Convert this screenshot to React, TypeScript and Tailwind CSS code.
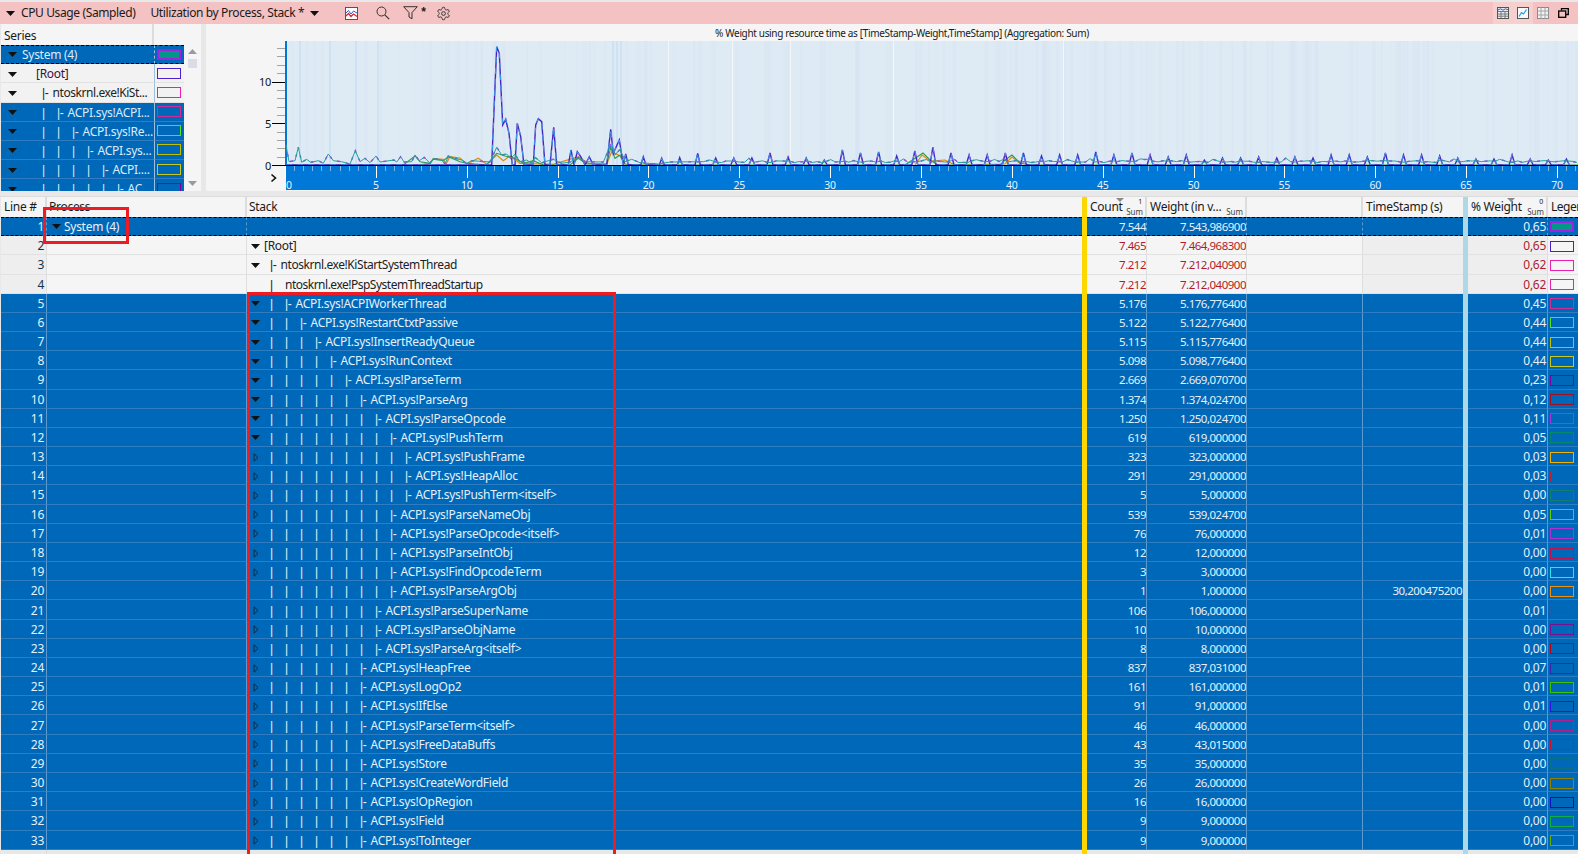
import React from "react";

type Exp = "open" | "closed" | "none";
type Row = { line: number; pipes: number; name: string; exp: Exp; count: string; weight: string; ts?: string; pct: string; color: string };

const rows: Row[] = [
  { line: 5, pipes: 1, name: "ACPI.sys!ACPIWorkerThread", exp: "open", count: "5.176", weight: "5.176,776400", pct: "0,45", color: "#d02c98" },
  { line: 6, pipes: 2, name: "ACPI.sys!RestartCtxtPassive", exp: "open", count: "5.122", weight: "5.122,776400", pct: "0,44", color: "#5fe020" },
  { line: 7, pipes: 3, name: "ACPI.sys!InsertReadyQueue", exp: "open", count: "5.115", weight: "5.115,776400", pct: "0,44", color: "#c0c000" },
  { line: 8, pipes: 4, name: "ACPI.sys!RunContext", exp: "open", count: "5.098", weight: "5.098,776400", pct: "0,44", color: "#c8c820" },
  { line: 9, pipes: 5, name: "ACPI.sys!ParseTerm", exp: "open", count: "2.669", weight: "2.669,070700", pct: "0,23", color: "#7a00a0" },
  { line: 10, pipes: 6, name: "ACPI.sys!ParseArg", exp: "open", count: "1.374", weight: "1.374,024700", pct: "0,12", color: "#a01020" },
  { line: 11, pipes: 7, name: "ACPI.sys!ParseOpcode", exp: "open", count: "1.250", weight: "1.250,024700", pct: "0,11", color: "#b030e0" },
  { line: 12, pipes: 8, name: "ACPI.sys!PushTerm", exp: "open", count: "619", weight: "619,000000", pct: "0,05", color: "#008a6a" },
  { line: 13, pipes: 9, name: "ACPI.sys!PushFrame", exp: "closed", count: "323", weight: "323,000000", pct: "0,03", color: "#f0b000" },
  { line: 14, pipes: 9, name: "ACPI.sys!HeapAlloc", exp: "closed", count: "291", weight: "291,000000", pct: "0,03", color: "#c02030" },
  { line: 15, pipes: 9, name: "ACPI.sys!PushTerm<itself>", exp: "closed", count: "5", weight: "5,000000", pct: "0,00", color: "#10806a" },
  { line: 16, pipes: 8, name: "ACPI.sys!ParseNameObj", exp: "closed", count: "539", weight: "539,024700", pct: "0,05", color: "#60d000" },
  { line: 17, pipes: 8, name: "ACPI.sys!ParseOpcode<itself>", exp: "closed", count: "76", weight: "76,000000", pct: "0,01", color: "#b030d0" },
  { line: 18, pipes: 8, name: "ACPI.sys!ParseIntObj", exp: "closed", count: "12", weight: "12,000000", pct: "0,00", color: "#c01050" },
  { line: 19, pipes: 8, name: "ACPI.sys!FindOpcodeTerm", exp: "closed", count: "3", weight: "3,000000", pct: "0,00", color: "#30e0f0" },
  { line: 20, pipes: 8, name: "ACPI.sys!ParseArgObj", exp: "none", count: "1", weight: "1,000000", ts: "30,200475200", pct: "0,00", color: "#f09010" },
  { line: 21, pipes: 7, name: "ACPI.sys!ParseSuperName", exp: "closed", count: "106", weight: "106,000000", pct: "0,01", color: "#1a5fb0" },
  { line: 22, pipes: 7, name: "ACPI.sys!ParseObjName", exp: "closed", count: "10", weight: "10,000000", pct: "0,00", color: "#7a1090" },
  { line: 23, pipes: 7, name: "ACPI.sys!ParseArg<itself>", exp: "closed", count: "8", weight: "8,000000", pct: "0,00", color: "#c00010" },
  { line: 24, pipes: 6, name: "ACPI.sys!HeapFree", exp: "closed", count: "837", weight: "837,031000", pct: "0,07", color: "#4020b0" },
  { line: 25, pipes: 6, name: "ACPI.sys!LogOp2", exp: "closed", count: "161", weight: "161,000000", pct: "0,01", color: "#40c000" },
  { line: 26, pipes: 6, name: "ACPI.sys!IfElse", exp: "closed", count: "91", weight: "91,000000", pct: "0,01", color: "#3010e0" },
  { line: 27, pipes: 6, name: "ACPI.sys!ParseTerm<itself>", exp: "closed", count: "46", weight: "46,000000", pct: "0,00", color: "#b02090" },
  { line: 28, pipes: 6, name: "ACPI.sys!FreeDataBuffs", exp: "closed", count: "43", weight: "43,015000", pct: "0,00", color: "#d01030" },
  { line: 29, pipes: 6, name: "ACPI.sys!Store", exp: "closed", count: "35", weight: "35,000000", pct: "0,00", color: "#0a7088" },
  { line: 30, pipes: 6, name: "ACPI.sys!CreateWordField", exp: "closed", count: "26", weight: "26,000000", pct: "0,00", color: "#908000" },
  { line: 31, pipes: 6, name: "ACPI.sys!OpRegion", exp: "closed", count: "16", weight: "16,000000", pct: "0,00", color: "#1010c0" },
  { line: 32, pipes: 6, name: "ACPI.sys!Field", exp: "closed", count: "9", weight: "9,000000", pct: "0,00", color: "#10b040" },
  { line: 33, pipes: 6, name: "ACPI.sys!ToInteger", exp: "closed", count: "9", weight: "9,000000", pct: "0,00", color: "#60b000" },
];

function Down({ className = "" }: { className?: string }) {
  return (
    <svg width="9" height="5" viewBox="0 0 9 5" className={"shrink-0 " + className}>
      <path d="M0 0H9L4.5 5Z" fill="#111" />
    </svg>
  );
}
function Closed() {
  return (
    <svg width="6" height="9" viewBox="0 0 6 9" className="shrink-0">
      <path d="M1 .8V8.2L5 4.5Z" fill="none" stroke="#16263a" strokeWidth="1" />
    </svg>
  );
}
function Pipes({ n }: { n: number }) {
  return (
    <>
      {Array.from({ length: n }).map((_, i) => (
        <span key={i} className="w-[15px] shrink-0 font-['Liberation_Sans']">|</span>
      ))}
    </>
  );
}
function Prefix() {
  return <span className="whitespace-pre font-['Liberation_Sans'] mr-[1px]">{"|- "}</span>;
}

const COLS = "grid grid-cols-[46px_200px_835px_5px_60px_100px_116px_100px_5px_80px_30px]";
const NUM = "justify-end text-[11.5px] tracking-[-0.5px] ";

function Swatch({ color, fill, thick }: { color: string; fill?: string; thick?: boolean }) {
  return (
    <div
      className={"w-[24px] h-[11px] shrink-0 " + (thick ? "border-2" : "border")}
      style={{ borderColor: color, backgroundColor: fill }}
    />
  );
}

function TableRow({ kind, line, stack, count, weight, ts, pct, legend, process }: {
  kind: "focus" | "plain" | "sel";
  line: number;
  stack: React.ReactNode;
  count: string;
  weight: string;
  ts?: string;
  pct: string;
  legend: React.ReactNode;
  process?: React.ReactNode;
}) {
  const sel = kind !== "plain";
  const base =
    "flex items-center min-w-0 overflow-hidden " +
    (kind === "focus"
      ? "border-y border-dashed border-y-black bg-[#0068b8] text-[#e6f0fa] "
      : kind === "sel"
      ? "border-b border-b-[#2f7cc0] bg-[#0068b8] text-[#e6f0fa] pt-[2px] "
      : "border-b border-b-[#e2e2e2] pt-[2px] ");
  const div = sel ? "border-r border-r-[#5c9ad0] " : "border-r border-r-[#dedede] ";
  const light = sel ? "" : "bg-[#f5f5f5] ";
  const dark = sel ? "" : "bg-[#eeeeee] ";
  const num = sel ? "" : "text-[#b01c2c] ";
  return (
    <div className={COLS + " h-[19.18px]"}>
      <div className={base + div + dark + "justify-end pr-[2px]" + (sel ? " text-[#e6f0fa]" : " text-[#17324c]")}>{line}</div>
      <div className={base + div + light}>{process}</div>
      <div className={base + light + (sel ? "text-[#e6f0fa]" : "text-[#222]")}>{stack}</div>
      <div className="bg-[#ffd700]" />
      <div className={base + div + light + num + NUM}>{count}</div>
      <div className={base + div + light + num + NUM}>{weight}</div>
      <div className={base + div + light} />
      <div className={base + dark + NUM + "pr-[1px]"}>{ts}</div>
      <div className="bg-[#add8e6]" />
      <div className={base + div + dark + num + "justify-end pr-[1px]"}>{pct}</div>
      <div className={base + light + "pl-[2px]"}>{legend}</div>
    </div>
  );
}

function SumHead({ label, rank, className = "" }: { label: string; rank?: string; className?: string }) {
  return (
    <div className={"relative flex items-center pl-[3px] overflow-hidden border-r-2 border-r-[#dcdcdc] " + className}>
      <span className="whitespace-nowrap">{label}</span>
      {rank && (
        <svg width="8" height="4" viewBox="0 0 8 4" className="absolute top-[1px] left-[50%]">
          <path d="M0 0H8L4 4Z" fill="#8a8a8a" />
        </svg>
      )}
      {rank && <span className="absolute top-0 right-[3px] text-[7px] leading-[9px]">{rank}</span>}
      <span className="absolute bottom-[0px] right-[2px] text-[8px] leading-[10px] tracking-normal text-[#444]">Sum</span>
    </div>
  );
}

function SeriesRow({ kind, children, color, fill, thick, dashed }: {
  kind: "sel" | "plain";
  children: React.ReactNode;
  color: string;
  fill?: string;
  thick?: boolean;
  dashed?: boolean;
}) {
  const c =
    kind === "sel"
      ? "bg-[#0068b8] text-[#dcebf8] " + (dashed ? "border-y border-dashed border-y-black" : "border-b border-b-[#2f7cc0]")
      : "bg-[#f2f2f2] text-[#222] border-b border-b-[#e2e2e2]";
  return (
    <div className="flex h-[19.18px] shrink-0">
      <div className={"w-[153px] flex items-center overflow-hidden pl-[7px] whitespace-nowrap " + (dashed ? "" : "pt-[2px] ") + c}>{children}</div>
      <div className={"w-[30px] flex items-center pl-[2px] border-l border-l-[#9fc0dc] " + c}>
        <Swatch color={color} fill={fill} thick={thick} />
      </div>
    </div>
  );
}

/* ---------- chart ---------- */
const X = (t: number) => 285 + 18.17 * t;
const z4 = (a: number[][]) => a.map(([x, y]) => [270 + x / 3, 30 + y / 3]);
const rnd = (i: number) => {
  const v = Math.sin(i * 12.9898 + 4.1) * 43758.5453;
  return v - Math.floor(v);
};
const spikeH = [7, 7, 7, 12, 8, 7, 5, 15, 12, 13, 9, 14, 18, 12, 10, 10, 12, 12, 9, 10, 10, 13, 10, 12, 10, 8, 10, 5, 7, 7, 8, 7, 8, 7, 10, 10, 8, 12, 10, 10, 9, 7, 6, 6, 10, 6, 5, 6];

const blueEarly = z4([[48,405],[665,405],[670,290],[680,50],[688,70],[698,285],[707,268],[717,310],[727,405],[735,405],[742,280],[752,320],[762,405],[790,405],[797,285],[805,266],[815,275],[825,405],[840,405],[851,292],[860,405],[895,405],[903,360],[912,405],[922,365],[932,380],[945,405],[958,380],[970,405],[1010,405],[1022,298],[1030,370],[1048,330],[1060,405],[1067,372],[1075,405],[1112,405],[1120,380],[1128,405],[1168,405],[1175,385],[1183,405],[1222,405],[1229,383],[1237,405],[1275,405],[1283,370],[1291,405],[1330,405]]);
const blueLate: number[][] = [];
spikeH.forEach((h, k) => {
  const x = 715.7 + 18.1 * k;
  blueLate.push([x - 3, 165], [x, 165 - h], [x + 3, 165]);
});
const blue = [...blueEarly, ...blueLate];

const tealEarly = z4([[48,345],[57,395],[75,392],[85,352],[95,397],[110,388],[122,397],[145,392],[160,400],[175,372],[190,392],[215,395],[240,402],[256,362],[270,395],[285,385],[300,398],[318,378],[330,396],[372,390],[380,396],[392,380],[402,396],[425,395],[435,375],[448,392],[463,382],[480,400],[490,385],[515,390],[525,402],[535,378],[555,385],[575,390],[590,400],[605,392],[660,396],[680,352],[695,375],[710,372],[722,385],[735,373],[750,395],[770,390],[785,400],[795,382],[815,398],[850,388],[875,400],[900,396],[925,382],[945,395],[1000,396],[1022,345],[1035,375],[1050,358],[1065,395],[1085,388],[1110,398],[1165,402],[1200,396],[1300,395],[1320,390],[1340,397]]);
const tealLate: number[][] = [];
for (let i = 0; i < 190; i++) {
  const x = 717 + i * 4.55;
  const big = rnd(i) > 0.88 ? 2.5 : 0;
  tealLate.push([x, 161.6 + (rnd(i + 40) - 0.5) * 2 - big]);
}
const teal = [...tealEarly, ...tealLate];

const greenEarly = z4([[48,405],[400,405],[435,378],[450,395],[480,400],[490,388],[520,392],[535,380],[570,395],[590,400],[650,405],[680,370],[705,378],[735,385],[760,400],[790,392],[820,405],[900,405],[925,385],[950,402],[1010,402],[1022,352],[1035,385],[1050,375],[1065,402],[1100,405]]);
const greenLate = [[905, 165], [917, 157], [923, 153], [930, 160], [938, 165], [1000, 165], [1005, 160], [1012, 155], [1020, 163], [1030, 165], [1578, 165]];
const green = [...greenEarly, ...greenLate];
const orange = z4([[440,405],[480,400],[490,386],[520,388],[528,402],[540,380],[570,384],[590,402],[625,385],[650,403],[680,375],[700,392],[720,378],[750,400],[850,403],[925,380],[955,400],[1010,403],[1025,365],[1050,378],[1065,403]]);
const orangeLate = [[915, 165], [922, 155], [930, 161], [945, 160], [955, 165], [1005, 164], [1012, 157], [1022, 165]];

const pts = (a: number[][]) => a.map((p) => p[0].toFixed(1) + "," + p[1].toFixed(1)).join(" ");

const stripes = Array.from({ length: 170 }).map((_, i) => ({
  x: 287 + rnd(i + 300) * 1290,
  w: 1 + Math.floor(rnd(i + 500) * 4),
  o: 0.05 + rnd(i + 700) * 0.2,
}));

function Chart() {
  return (
    <svg width="1372" height="150" viewBox="206 41 1372 150" className="block">
      <rect x="286" y="41" width="1292" height="125" fill="#deeaf4" />
      {stripes.map((s, i) => (
        <rect key={i} x={s.x} y="41" width={s.w} height="125" fill="#cfe1f1" opacity={s.o} />
      ))}
      {[299, 329, 355, 377, 612, 616, 620].map((x) => (
        <rect key={x} x={x} y="41" width="2" height="125" fill="#cfe2f3" />
      ))}
      {[668, 732, 790, 893, 1063].map((x) => (
        <rect key={x} x={x} y="41" width="1" height="125" fill="#f4f7fa" />
      ))}
      {/* y axis */}
      <rect x="285" y="41" width="2" height="125" fill="#0078d7" />
      {Array.from({ length: 14 }).map((_, i) => {
        const n = i + 1;
        const y = Math.round(165 - 8.35 * n) + 0.5;
        const major = n % 5 === 0;
        return <line key={n} x1={major ? 272 : 277} x2="285" y1={y} y2={y} stroke={major ? "#000" : "#a4a4a4"} />;
      })}
      <text x="271" y="86" textAnchor="end" fontSize="11" fill="#111" fontFamily="Noto Sans">10</text>
      <text x="271" y="128" textAnchor="end" fontSize="11" fill="#111" fontFamily="Noto Sans">5</text>
      <text x="271" y="170" textAnchor="end" fontSize="11" fill="#111" fontFamily="Noto Sans">0</text>
      {/* series */}
      <polyline points={pts(orange)} fill="none" stroke="#e08a10" strokeWidth="1.2" />
      <polyline points={pts(orangeLate)} fill="none" stroke="#e08a10" strokeWidth="1.2" />
      <polyline points={pts(green)} fill="none" stroke="#2f9a50" strokeWidth="1.1" />
      <polyline points={pts(blue)} fill="none" stroke="#4a22c4" strokeWidth="1.4" />
      <polyline points={pts(blue)} fill="none" stroke="#3aa0ea" strokeWidth="1" strokeDasharray="6 5" />
      <polyline points={pts(teal)} fill="none" stroke="#b030f0" strokeWidth="1.4" strokeDasharray="3 6" />
      <polyline points={pts(teal)} fill="none" stroke="#1fa39a" strokeWidth="1" />
      {/* x axis */}
      <rect x="272" y="165" width="1306" height="1" fill="#000" />
      <rect x="286" y="166" width="1292" height="24" fill="#0078d7" />
      {Array.from({ length: 143 }).map((_, i) => {
        const x = Math.round(X(i * 0.5)) + 0.5;
        const major = i % 10 === 0;
        return <line key={i} x1={x} x2={x} y1="166" y2={major ? 178 : 171} stroke={major ? "#fff" : "#7db8ea"} />;
      })}
      {Array.from({ length: 15 }).map((_, i) => (
        <text key={i} x={i === 0 ? 286 : X(i * 5)} y="189" textAnchor={i === 0 ? "start" : "middle"} fontSize="10.5" fill="#e8f3fc" fontFamily="Noto Sans">
          {i * 5}
        </text>
      ))}
      <path d="M271.5 174.5L275.5 178L271.5 181.5" fill="none" stroke="#111" strokeWidth="1.6" />
    </svg>
  );
}

function ToolbarLeft() {
  return (
    <div className="flex items-center h-full tracking-[-0.38px]">
      <Down className="ml-[6px]" />
      <span className="ml-[6px]">CPU Usage (Sampled)</span>
      <span className="ml-[15px]">Utilization by Process, Stack *</span>
      <Down className="ml-[6px]" />
      <svg width="13" height="13" viewBox="0 0 13 13" className="ml-[26px]">
        <rect x=".5" y=".5" width="12" height="12" fill="#fff" stroke="#555" />
        <path d="M1 6L3.5 3.5L6 7L8.5 4L12 6" fill="none" stroke="#2a5fd0" />
        <path d="M1 9L3.5 6.5L6 9.5L8.5 7L12 9.5" fill="none" stroke="#e02030" strokeWidth="1.2" />
      </svg>
      <svg width="14" height="14" viewBox="0 0 14 14" className="ml-[18px]">
        <circle cx="5.5" cy="5.5" r="4.5" fill="none" stroke="#333" />
        <path d="M8.8 8.8L13.2 13.2" stroke="#333" strokeWidth="1.2" />
      </svg>
      <svg width="15" height="14" viewBox="0 0 15 14" className="ml-[13px]">
        <path d="M.7 .7H14.3L9 6.6V12.8L6 11V6.6Z" fill="none" stroke="#333" strokeLinejoin="round" />
      </svg>
      <span className="ml-[3px] text-[12px] leading-none font-semibold -mt-[2px] font-['Liberation_Sans']">*</span>
      <svg width="15" height="15" viewBox="0 0 24 24" className="ml-[11px]" fill="none" stroke="#333" strokeWidth="1.6">
        <path d="M12.22 2h-.44a2 2 0 0 0-2 2v.18a2 2 0 0 1-1 1.73l-.43.25a2 2 0 0 1-2 0l-.15-.08a2 2 0 0 0-2.73.73l-.22.38a2 2 0 0 0 .73 2.73l.15.1a2 2 0 0 1 1 1.72v.51a2 2 0 0 1-1 1.74l-.15.09a2 2 0 0 0-.73 2.73l.22.38a2 2 0 0 0 2.73.73l.15-.08a2 2 0 0 1 2 0l.43.25a2 2 0 0 1 1 1.73V20a2 2 0 0 0 2 2h.44a2 2 0 0 0 2-2v-.18a2 2 0 0 1 1-1.73l.43-.25a2 2 0 0 1 2 0l.15.08a2 2 0 0 0 2.73-.73l.22-.39a2 2 0 0 0-.73-2.73l-.15-.08a2 2 0 0 1-1-1.74v-.5a2 2 0 0 1 1-1.74l.15-.09a2 2 0 0 0 .73-2.73l-.22-.38a2 2 0 0 0-2.73-.73l-.15.08a2 2 0 0 1-2 0l-.43-.25a2 2 0 0 1-1-1.73V4a2 2 0 0 0-2-2z" />
        <circle cx="12" cy="12" r="3" />
      </svg>
    </div>
  );
}

function ToolbarRight() {
  return (
    <div className="flex h-full items-stretch pr-[5px]">
      <div className="w-[20px] flex items-center justify-center bg-[#f6cfcf]">
        <svg width="12" height="12" viewBox="0 0 12 12">
          <rect x=".5" y=".5" width="11" height="11" fill="#eef0f2" stroke="#555" />
          <path d="M1 4.5H11M1 7H11M1 9.2H11M4 4.5V11M8 4.5V11" stroke="#777" />
          <path d="M1 3L3.5 1.8L6 3.2L8.5 1.8L11 2.8" fill="none" stroke="#2a5fd0" />
        </svg>
      </div>
      <div className="w-[20px] flex items-center justify-center bg-[#f6cfcf]">
        <svg width="12" height="12" viewBox="0 0 12 12">
          <rect x=".5" y=".5" width="11" height="11" fill="#f6f8fa" stroke="#555" />
          <path d="M2 9.5L4.5 5.5L6.5 7L9.5 2.5" fill="none" stroke="#1e9be8" strokeWidth="1.2" />
        </svg>
      </div>
      <div className="w-[20px] flex items-center justify-center">
        <svg width="12" height="12" viewBox="0 0 12 12">
          <rect x=".5" y=".5" width="11" height="11" fill="#f2f2f2" stroke="#8a8a8a" />
          <path d="M.5 4H11.5M.5 8H11.5M4 .5V11.5M8 .5V11.5" stroke="#a4a4a4" />
        </svg>
      </div>
      <div className="w-[20px] flex items-center justify-center">
        <svg width="11" height="10" viewBox="0 0 11 10">
          <path d="M3.5 2.5V.7H10.3V6.5H8" fill="none" stroke="#000" strokeWidth="1.3" />
          <rect x=".7" y="3" width="7" height="6.3" fill="none" stroke="#000" strokeWidth="1.3" />
        </svg>
      </div>
    </div>
  );
}

export default function App() {
  return (
    <div className="relative w-[1578px] h-[854px] overflow-hidden bg-[#e8e8e8] pt-[2px] text-[12px] leading-[16px] text-[#1a1a1a] tracking-[-0.28px] font-['Noto_Sans',sans-serif]">
      <div className="h-[22px] flex justify-between bg-[#f4c2c2]">
        <ToolbarLeft />
        <ToolbarRight />
      </div>

      <div className="flex h-[167px] pl-[1px]">
        {/* series */}
        <div className="w-[183px] flex flex-col overflow-hidden">
          <div className="flex h-[21px] shrink-0 bg-[#f5f5f5]">
            <div className="w-[153px] flex items-center pl-[3px] pt-[2px] border-r-2 border-r-[#dcdcdc]">Series</div>
          </div>
          <SeriesRow kind="sel" color="#a020e0" fill="#009688" thick dashed>
            <Down /><span className="ml-[5px]">System (4)</span>
          </SeriesRow>
          <SeriesRow kind="plain" color="#4a20d0">
            <Down /><span className="ml-[19px] text-[#3a1040]">[Root]</span>
          </SeriesRow>
          <SeriesRow kind="plain" color="#e81fb0">
            <Down /><span className="w-[25px] shrink-0" /><Prefix /><span className="tracking-[-0.45px]">ntoskrnl.exe!KiSt...</span>
          </SeriesRow>
          <SeriesRow kind="sel" color="#d02c98">
            <Down /><span className="w-[25px] shrink-0" /><Pipes n={1} /><Prefix /><span>ACPI.sys!ACPI...</span>
          </SeriesRow>
          <SeriesRow kind="sel" color="#5fe020">
            <Down /><span className="w-[25px] shrink-0" /><Pipes n={2} /><Prefix /><span>ACPI.sys!Re...</span>
          </SeriesRow>
          <SeriesRow kind="sel" color="#c0c000">
            <Down /><span className="w-[25px] shrink-0" /><Pipes n={3} /><Prefix /><span>ACPI.sys...</span>
          </SeriesRow>
          <SeriesRow kind="sel" color="#c8c820">
            <Down /><span className="w-[25px] shrink-0" /><Pipes n={4} /><Prefix /><span>ACPI....</span>
          </SeriesRow>
          <SeriesRow kind="sel" color="#7a00a0">
            <Down /><span className="w-[25px] shrink-0" /><Pipes n={5} /><Prefix /><span>AC...</span>
          </SeriesRow>
        </div>

        {/* scrollbar */}
        <div className="w-[17px] bg-[#f5f5f5] flex flex-col items-center justify-between pt-[25px] pb-[5px]">
          <div className="flex flex-col items-center gap-[5px]">
            <svg width="9" height="5" viewBox="0 0 9 5"><path d="M0 5H9L4.5 0Z" fill="#9a9aa4" /></svg>
            <div className="w-[9px] h-[9px] bg-[#dcdce6]" />
          </div>
          <svg width="9" height="5" viewBox="0 0 9 5"><path d="M0 0H9L4.5 5Z" fill="#9a9aa4" /></svg>
        </div>

        <div className="w-[5px]" />

        {/* chart */}
        <div className="w-[1372px] bg-[#f5f5f5] flex flex-col">
          <div className="h-[17px] flex items-center justify-center pl-[20px] text-[10px] tracking-[-0.34px]">
            % Weight using resource time as [TimeStamp-Weight,TimeStamp] (Aggregation: Sum)
          </div>
          <Chart />
        </div>
      </div>

      <div className="h-[5px]" />

      {/* table */}
      <div className="pl-[1px] flex flex-col border-t border-t-[#dcdcdc]">
        <div className={COLS + " h-[20px] bg-[#f5f5f5]"}>
          <div className="flex items-center pl-[3px] border-r-2 border-r-[#dcdcdc] whitespace-nowrap">Line #</div>
          <div className="flex items-center pl-[2px] border-r-2 border-r-[#dcdcdc]">Process</div>
          <div className="flex items-center pl-[2px]">Stack</div>
          <div className="bg-[#ffd700]" />
          <SumHead label="Count" rank="1" />
          <SumHead label="Weight (in v..." />
          <div className="border-r-2 border-r-[#dcdcdc]" />
          <div className="flex items-center pl-[3px]">TimeStamp (s)</div>
          <div className="bg-[#add8e6]" />
          <SumHead label="% Weight" rank="0" />
          <div className="flex items-center pl-[3px] overflow-hidden whitespace-nowrap tracking-[-0.5px]">Legend</div>
        </div>

        <TableRow
          kind="focus"
          line={1}
          process={<><Down className="ml-[5px]" /><span className="ml-[3px]">System (4)</span></>}
          stack={null}
          count="7.544"
          weight="7.543,986900"
          pct="0,65"
          legend={<Swatch color="#a020e0" fill="#009688" thick />}
        />
        <TableRow
          kind="plain"
          line={2}
          stack={<div className="flex items-center pl-[4px]"><Down /><span className="ml-[4px]">[Root]</span></div>}
          count="7.465"
          weight="7.464,968300"
          pct="0,65"
          legend={<Swatch color="#4a20d0" />}
        />
        <TableRow
          kind="plain"
          line={3}
          stack={<div className="flex items-center pl-[4px]"><Down /><span className="w-[10px] shrink-0" /><Prefix /><span className="tracking-[-0.44px]">ntoskrnl.exe!KiStartSystemThread</span></div>}
          count="7.212"
          weight="7.212,040900"
          pct="0,62"
          legend={<Swatch color="#e81fb0" />}
        />
        <TableRow
          kind="plain"
          line={4}
          stack={<div className="flex items-center pl-[23px]"><Pipes n={1} /><span className="tracking-[-0.5px]">ntoskrnl.exe!PspSystemThreadStartup</span></div>}
          count="7.212"
          weight="7.212,040900"
          pct="0,62"
          legend={<Swatch color="#e81fb0" />}
        />
        {rows.map((r) => (
          <TableRow
            key={r.line}
            kind="sel"
            line={r.line}
            stack={
              <div className="flex items-center pl-[4px]">
                <div className="w-[19px] shrink-0 flex items-center">
                  {r.exp === "open" && <Down />}
                  {r.exp === "closed" && <span className="ml-[2px] flex"><Closed /></span>}
                </div>
                <Pipes n={r.pipes} />
                <Prefix />
                <span className="whitespace-nowrap">{r.name}</span>
              </div>
            }
            count={r.count}
            weight={r.weight}
            ts={r.ts}
            pct={r.pct}
            legend={<Swatch color={r.color} />}
          />
        ))}
        <div className={COLS + " h-[4px]"}>
          <div className="border-r border-r-[#dedede]" />
          <div />
          <div />
          <div className="bg-[#ffd700]" />
          <div /><div /><div /><div />
          <div className="bg-[#add8e6]" />
          <div /><div />
        </div>
      </div>

      {/* red annotation rectangles */}
      <div className="absolute left-[43px] top-[207px] w-[86px] h-[37px] border-[3px] border-[#ed1c24]" />
      <div className="absolute left-[247px] top-[292px] w-[369px] h-[580px] border-[3px] border-[#ed1c24]" />
    </div>
  );
}
